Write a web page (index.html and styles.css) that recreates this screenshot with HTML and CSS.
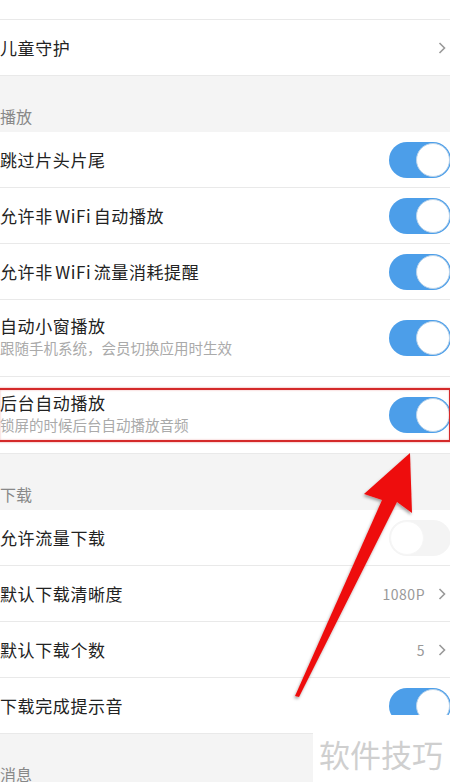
FILE: index.html
```html
<!DOCTYPE html>
<html lang="zh-CN">
  <head>
    <meta charset="UTF-8" />
    <meta name="viewport" content="width=device-width, initial-scale=1.0" />
    <title>设置</title>
    <link rel="stylesheet" href="styles.css">
  </head>
  <body>
    <div class="page">
      <!-- 上一组 -->
      <div class="group">
        <div class="row row-cut"></div>
        <div class="row">
          <span class="title">儿童守护</span>
          <svg class="chevron" width="8" height="12" viewBox="0 0 8 12"><path d="M1.5 1 L6.5 6 L1.5 11" /></svg>
        </div>
      </div>

      <!-- 播放 -->
      <div class="section-head">播放</div>
      <div class="group">
        <div class="row">
          <span class="title">跳过片头片尾</span>
          <span class="switch on"></span>
        </div>
        <div class="row">
          <span class="title">允许非 WiFi 自动播放</span>
          <span class="switch on"></span>
        </div>
        <div class="row">
          <span class="title">允许非 WiFi 流量消耗提醒</span>
          <span class="switch on"></span>
        </div>
        <div class="row row-tall">
          <div class="text">
            <span class="title">自动小窗播放</span>
            <span class="sub">跟随手机系统，会员切换应用时生效</span>
          </div>
          <span class="switch on"></span>
        </div>
        <div class="row row-tall">
          <div class="text">
            <span class="title">后台自动播放</span>
            <span class="sub">锁屏的时候后台自动播放音频</span>
          </div>
          <span class="switch on"></span>
        </div>
      </div>

      <!-- 下载 -->
      <div class="section-head">下载</div>
      <div class="group">
        <div class="row">
          <span class="title">允许流量下载</span>
          <span class="switch"></span>
        </div>
        <div class="row">
          <span class="title">默认下载清晰度</span>
          <span class="value">1080P</span>
          <svg class="chevron" width="8" height="12" viewBox="0 0 8 12"><path d="M1.5 1 L6.5 6 L1.5 11" /></svg>
        </div>
        <div class="row">
          <span class="title">默认下载个数</span>
          <span class="value">5</span>
          <svg class="chevron" width="8" height="12" viewBox="0 0 8 12"><path d="M1.5 1 L6.5 6 L1.5 11" /></svg>
        </div>
        <div class="row">
          <span class="title">下载完成提示音</span>
          <span class="switch on"></span>
        </div>
      </div>

      <!-- 消息 -->
      <div class="section-head">消息</div>
    </div>

    <!-- 标注 -->
    <div class="mark-box"></div>
    <svg class="arrow" width="450" height="782" viewBox="0 0 450 782">
      <defs>
        <filter id="shadow" x="-20%" y="-20%" width="140%" height="140%">
          <feDropShadow dx="-1" dy="2" stdDeviation="1.5" flood-color="#000" flood-opacity="0.35" />
        </filter>
      </defs>
      <polygon
        points="410,453 412,513 397,502 299,697 295,696 382,500 364,494"
        fill="#ee1111"
        filter="url(#shadow)"
      />
    </svg>
    <div class="watermark">软件技巧</div>
  </body>
</html>
```

FILE: styles.css
```css
body {
  margin: 0;
  padding: 0;
  width: 450px;
  height: 782px;
  overflow: hidden;
  position: relative;
  background-color: #f4f4f4;
  font-family: "Noto Sans CJK SC", "Noto Sans", sans-serif;
  color: #222;
}
.page {
  display: flex;
  flex-direction: column;
  height: 782px;
  overflow: hidden;
}
.group {
  background-color: #fff;
}
.row {
  display: flex;
  align-items: center;
  height: 55px;
  border-top: 1px solid #e9e9e9;
  padding-left: 0;
  padding-right: 0;
}
.row:first-child {
  border-top: none;
}
.group .row:last-child {
  border-bottom: 1px solid #e9e9e9;
}
.row-cut {
  height: 19px;
}
.row-tall {
  height: 76px;
}
.title {
  font-size: 17px;
  line-height: 22px;
  flex: 1;
  letter-spacing: 0.6px;
  word-spacing: -2px;
}
.text {
  flex: 1;
  display: flex;
  flex-direction: column;
  margin-top: -3px;
}
.sub {
  font-size: 14.5px;
  color: #aaa;
  margin-top: 1px;
  line-height: 20px;
}
.value {
  font-size: 14px;
  color: #999;
  margin-right: 13px;
  letter-spacing: 0.5px;
}
.chevron {
  fill: none;
  stroke: #999;
  stroke-width: 1.6;
  margin-right: 4px;
  flex-shrink: 0;
}
.switch {
  width: 62px;
  height: 36px;
  border-radius: 18px;
  background-color: #f4f4f4;
  margin-right: -1px;
  position: relative;
  flex-shrink: 0;
}
.switch::after {
  content: "";
  position: absolute;
  top: 1px;
  left: 1px;
  width: 32px;
  height: 32px;
  border-radius: 50%;
  background-color: #fff;
  border: 1px solid #f6f6f6;
}
.switch.on {
  background-color: #4c9ee9;
}
.switch.on::after {
  left: auto;
  right: 1px;
  border-color: #b9d3ea;
}
.section-head {
  height: 56px;
  display: flex;
  align-items: flex-end;
  padding-bottom: 4px;
  box-sizing: border-box;
  font-size: 16px;
  color: #888;
  flex-shrink: 0;
}
.mark-box {
  position: absolute;
  left: -2px;
  top: 388px;
  width: 449px;
  height: 50px;
  border: 2px solid #d42a2a;
  box-shadow: 0 0 2px rgba(212, 42, 42, 0.5), inset 0 0 2px rgba(212, 42, 42, 0.4);
}
.arrow {
  position: absolute;
  left: 0;
  top: 0;
}
.watermark {
  position: absolute;
  left: 313px;
  top: 715px;
  right: 0;
  bottom: 0;
  background-color: #fff;
  color: #cfcfcf;
  font-size: 31px;
  padding-left: 6px;
  padding-top: 16px;
  white-space: nowrap;
}
```
